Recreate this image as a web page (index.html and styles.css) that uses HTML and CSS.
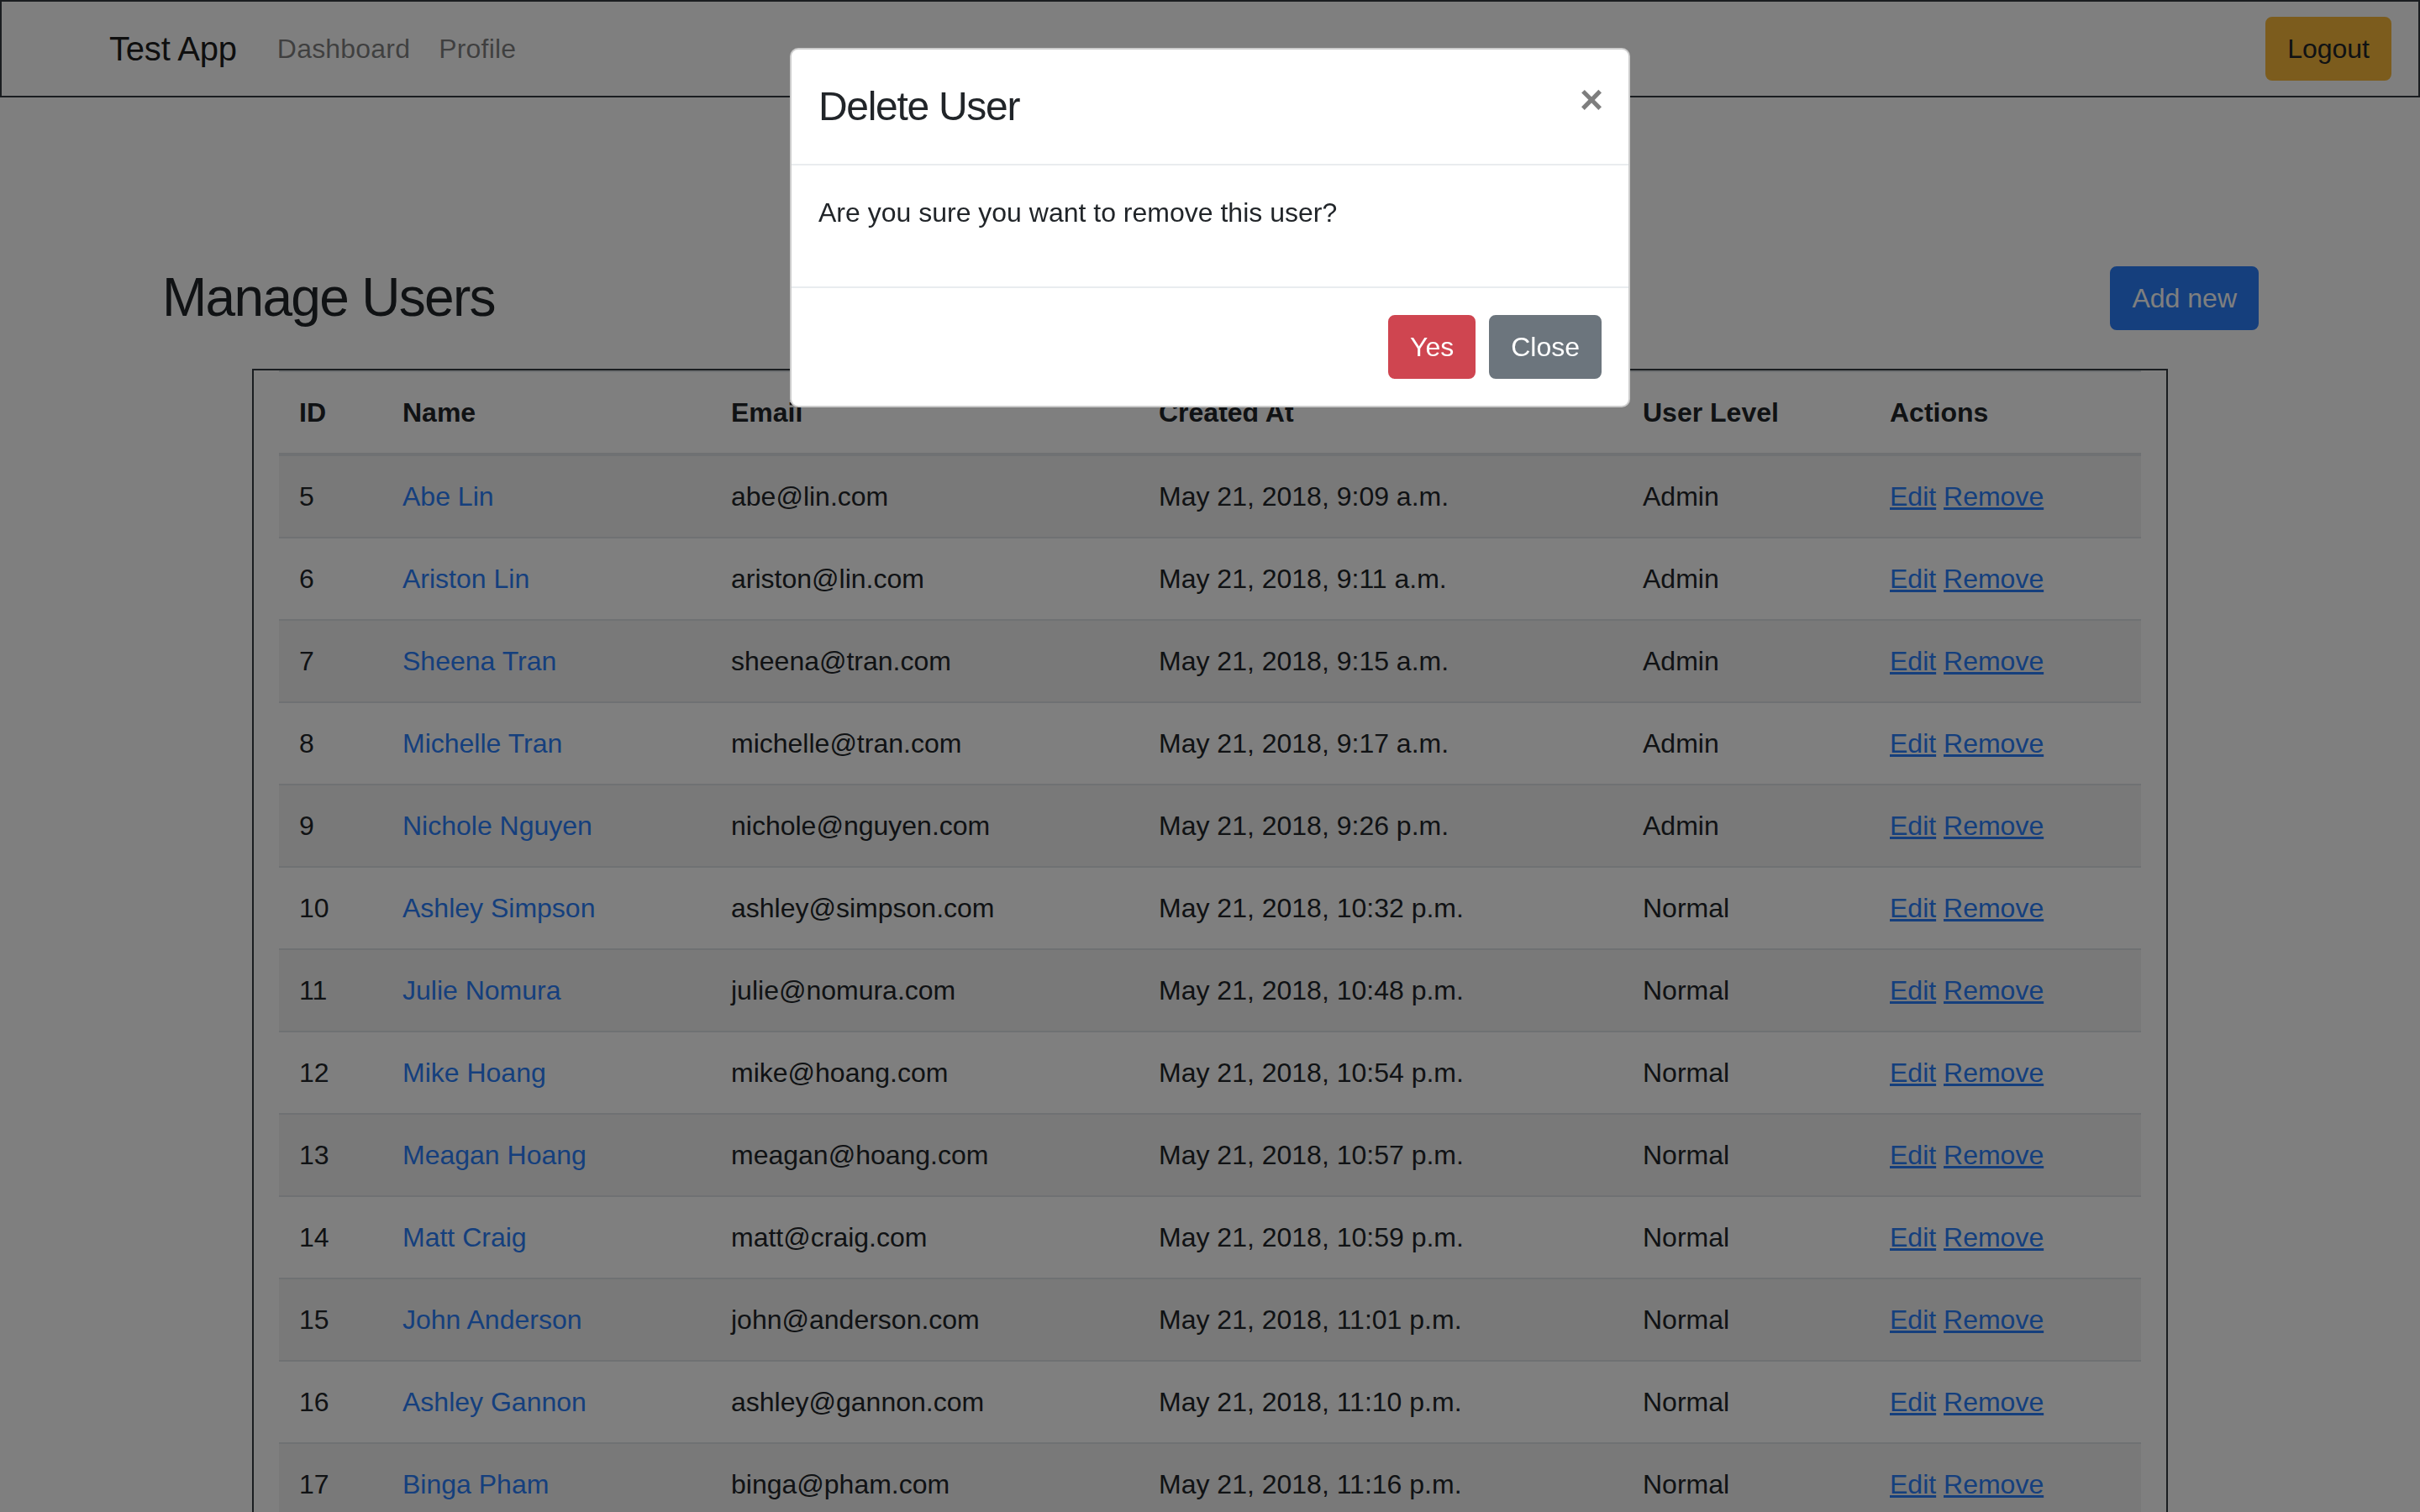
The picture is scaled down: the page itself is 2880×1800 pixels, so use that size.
FILE: index.html
```html
<!DOCTYPE html>
<html lang="en">
<head>
<meta charset="utf-8">
<title>Test App - Manage Users</title>
<link rel="stylesheet" href="styles.css">
</head>
<body>
<nav class="navbar">
  <a class="brand" href="#">Test App</a>
  <a class="nav-link" href="#">Dashboard</a>
  <a class="nav-link" href="#">Profile</a>
  <button class="btn btn-warning logout">Logout</button>
</nav>

<main>
  <div class="page-head">
    <h2 class="title">Manage Users</h2>
    <button class="btn btn-primary">Add new</button>
  </div>

  <div class="box">
    <table class="table">
      <thead>
        <tr>
          <th class="c-id">ID</th>
          <th class="c-name">Name</th>
          <th class="c-email">Email</th>
          <th class="c-created">Created At</th>
          <th class="c-level">User Level</th>
          <th class="c-actions">Actions</th>
        </tr>
      </thead>
      <tbody>
        <tr><td>5</td><td><a class="name" href="#">Abe Lin</a></td><td>abe@lin.com</td><td>May 21, 2018, 9:09 a.m.</td><td>Admin</td><td><a class="act" href="#">Edit</a> <a class="act" href="#">Remove</a></td></tr>
        <tr><td>6</td><td><a class="name" href="#">Ariston Lin</a></td><td>ariston@lin.com</td><td>May 21, 2018, 9:11 a.m.</td><td>Admin</td><td><a class="act" href="#">Edit</a> <a class="act" href="#">Remove</a></td></tr>
        <tr><td>7</td><td><a class="name" href="#">Sheena Tran</a></td><td>sheena@tran.com</td><td>May 21, 2018, 9:15 a.m.</td><td>Admin</td><td><a class="act" href="#">Edit</a> <a class="act" href="#">Remove</a></td></tr>
        <tr><td>8</td><td><a class="name" href="#">Michelle Tran</a></td><td>michelle@tran.com</td><td>May 21, 2018, 9:17 a.m.</td><td>Admin</td><td><a class="act" href="#">Edit</a> <a class="act" href="#">Remove</a></td></tr>
        <tr><td>9</td><td><a class="name" href="#">Nichole Nguyen</a></td><td>nichole@nguyen.com</td><td>May 21, 2018, 9:26 p.m.</td><td>Admin</td><td><a class="act" href="#">Edit</a> <a class="act" href="#">Remove</a></td></tr>
        <tr><td>10</td><td><a class="name" href="#">Ashley Simpson</a></td><td>ashley@simpson.com</td><td>May 21, 2018, 10:32 p.m.</td><td>Normal</td><td><a class="act" href="#">Edit</a> <a class="act" href="#">Remove</a></td></tr>
        <tr><td>11</td><td><a class="name" href="#">Julie Nomura</a></td><td>julie@nomura.com</td><td>May 21, 2018, 10:48 p.m.</td><td>Normal</td><td><a class="act" href="#">Edit</a> <a class="act" href="#">Remove</a></td></tr>
        <tr><td>12</td><td><a class="name" href="#">Mike Hoang</a></td><td>mike@hoang.com</td><td>May 21, 2018, 10:54 p.m.</td><td>Normal</td><td><a class="act" href="#">Edit</a> <a class="act" href="#">Remove</a></td></tr>
        <tr><td>13</td><td><a class="name" href="#">Meagan Hoang</a></td><td>meagan@hoang.com</td><td>May 21, 2018, 10:57 p.m.</td><td>Normal</td><td><a class="act" href="#">Edit</a> <a class="act" href="#">Remove</a></td></tr>
        <tr><td>14</td><td><a class="name" href="#">Matt Craig</a></td><td>matt@craig.com</td><td>May 21, 2018, 10:59 p.m.</td><td>Normal</td><td><a class="act" href="#">Edit</a> <a class="act" href="#">Remove</a></td></tr>
        <tr><td>15</td><td><a class="name" href="#">John Anderson</a></td><td>john@anderson.com</td><td>May 21, 2018, 11:01 p.m.</td><td>Normal</td><td><a class="act" href="#">Edit</a> <a class="act" href="#">Remove</a></td></tr>
        <tr><td>16</td><td><a class="name" href="#">Ashley Gannon</a></td><td>ashley@gannon.com</td><td>May 21, 2018, 11:10 p.m.</td><td>Normal</td><td><a class="act" href="#">Edit</a> <a class="act" href="#">Remove</a></td></tr>
        <tr><td>17</td><td><a class="name" href="#">Binga Pham</a></td><td>binga@pham.com</td><td>May 21, 2018, 11:16 p.m.</td><td>Normal</td><td><a class="act" href="#">Edit</a> <a class="act" href="#">Remove</a></td></tr>
      </tbody>
    </table>
  </div>
</main>

<div class="backdrop"></div>

<div class="modal">
  <div class="dialog">
    <div class="modal-header">
      <h4 class="modal-title">Delete User</h4>
      <button class="close" aria-label="Close">&times;</button>
    </div>
    <div class="modal-body">
      <p class="modal-text">Are you sure you want to remove this user?</p>
    </div>
    <div class="modal-footer">
      <button class="btn btn-danger">Yes</button>
      <button class="btn btn-secondary">Close</button>
    </div>
  </div>
</div>
</body>
</html>
```

FILE: styles.css
```css
* { box-sizing: border-box; }

html, body {
  margin: 0;
  padding: 0;
}

body {
  font-family: "Liberation Sans", Arial, sans-serif;
  font-size: 32px;
  line-height: 48px;
  color: #212529;
  background: #fff;
}

a { text-decoration: none; }

/* Navbar */
.navbar {
  display: flex;
  align-items: center;
  border: 2px solid #343a40;
  padding: 16px 32px;
}

.brand {
  font-size: 40px;
  line-height: 60px;
  padding: 10px 0;
  margin-left: 96px;
  margin-right: 32px;
  color: rgba(0, 0, 0, 0.9);
  letter-spacing: -0.2px;
}

.nav-link {
  color: rgba(0, 0, 0, 0.5);
  padding: 16px 16px;
  letter-spacing: 0.2px;
}

.nav-link + .nav-link { margin-left: 2px; }

.logout { margin-left: auto; }

/* Buttons */
.btn {
  font-family: inherit;
  font-size: 32px;
  line-height: 48px;
  padding: 12px 24px;
  border: 2px solid transparent;
  border-radius: 8px;
  cursor: pointer;
}

.btn-warning { background: #f8b93a; border-color: #f8b93a; color: #212529; }
.btn-primary { background: #2a7efa; border-color: #2a7efa; color: #fff; }
.btn-danger { background: #cf4550; border-color: #cf4550; color: #fff; }
.btn-secondary { background: #6c757d; border-color: #6c757d; color: #fff; }

/* Page head */
.page-head {
  display: flex;
  align-items: center;
  justify-content: space-between;
  margin: 200px 192px 46px 193px;
}

.title {
  margin: 0;
  font-size: 64px;
  line-height: 77px;
  font-weight: 500;
  letter-spacing: -1.7px;
}

/* Table box */
.box {
  width: 2280px;
  margin: 0 auto;
  border: 2px solid #343a40;
  padding: 0 30px;
}

.table {
  width: 100%;
  border-collapse: collapse;
  table-layout: fixed;
}

.table th,
.table td {
  padding: 24px;
  text-align: left;
  vertical-align: top;
  border-top: 2px solid #dee2e6;
  white-space: nowrap;
}

.table th {
  font-weight: 700;
  vertical-align: bottom;
  border-bottom: 4px solid #dee2e6;
}

.table tbody tr:nth-child(odd) { background: rgba(0, 0, 0, 0.05); }

.c-id { width: 123px; }
.c-name { width: 391px; }
.c-email { width: 509px; }
.c-created { width: 576px; }
.c-level { width: 294px; }
.c-actions { width: 323px; }

.name { color: #2a7efa; }
.act { color: #2a7efa; text-decoration: underline; }

/* Modal */
.backdrop {
  position: fixed;
  inset: 0;
  background: rgba(0, 0, 0, 0.5);
}

.modal {
  position: fixed;
  inset: 0;
}

.dialog {
  width: 1000px;
  margin: 57px auto 0;
  background: #fff;
  border: 2px solid rgba(0, 0, 0, 0.2);
  border-radius: 10px;
}

.modal-header {
  display: flex;
  align-items: flex-start;
  padding: 32px;
  border-bottom: 2px solid #e9ecef;
}

.modal-title {
  margin: 0;
  font-size: 48px;
  line-height: 72px;
  font-weight: 500;
  letter-spacing: -1.3px;
}

.close {
  margin: -28px -34px -32px auto;
  padding: 32px;
  background: transparent;
  border: 0;
  font-family: inherit;
  font-size: 48px;
  line-height: 48px;
  font-weight: 700;
  color: #000;
  opacity: 0.5;
  text-shadow: 0 2px 0 #fff;
}

.modal-body { padding: 32px; }

.modal-text { margin: 0 0 32px; }

.modal-footer {
  display: flex;
  justify-content: flex-end;
  gap: 16px;
  padding: 32px;
  border-top: 2px solid #e9ecef;
}
```
